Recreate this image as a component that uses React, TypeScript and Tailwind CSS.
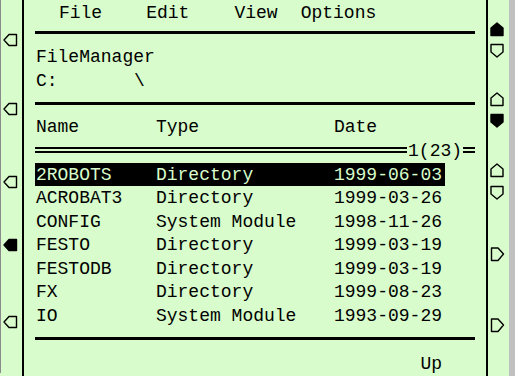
type Dir = "left" | "up" | "down" | "right";

const shapes: Record<Dir, string> = {
  left: "1,7 6,1.5 13.5,1.5 13.5,12.5 6,12.5",
  up: "7,1 13,6 13,13.5 1,13.5 1,6",
  down: "1,1.5 13,1.5 13,9 7,14 1,9",
  right: "1.5,1 8,1 13.5,7 8,13.5 1.5,13.5",
};

function Key({ dir, filled = false, className = "" }: { dir: Dir; filled?: boolean; className?: string }) {
  return (
    <svg width="15" height="15" viewBox="0 0 15 15" className={className}>
      <polygon
        points={shapes[dir]}
        fill={filled ? "#000" : "none"}
        stroke="#000"
        strokeWidth="1.4"
        strokeLinejoin="round"
      />
    </svg>
  );
}

const files = [
  { name: "2ROBOTS", type: "Directory", date: "1999-06-03" },
  { name: "ACROBAT3", type: "Directory", date: "1999-03-26" },
  { name: "CONFIG", type: "System Module", date: "1998-11-26" },
  { name: "FESTO", type: "Directory", date: "1999-03-19" },
  { name: "FESTODB", type: "Directory", date: "1999-03-19" },
  { name: "FX", type: "Directory", date: "1999-08-23" },
  { name: "IO", type: "System Module", date: "1993-09-29" },
];

const menu = [
  { label: "File", cls: "ml-[24px]" },
  { label: "Edit", cls: "ml-[44px]" },
  { label: "View", cls: "ml-[45px]" },
  { label: "Options", cls: "ml-[23px]" },
];

export default function App() {
  return (
    <div
      className="flex h-[376px] w-[515px] overflow-hidden bg-[#d8fccb] text-black"
      style={{ fontFamily: '"Liberation Mono", "DejaVu Sans Mono", monospace' }}
    >
      {/* left softkeys */}
      <div className="flex h-[373px] w-[22px] flex-col border-l border-[#8a8a8a] pl-[2px]">
        <Key dir="left" className="mt-[33px]" />
        <Key dir="left" className="mt-[54px]" />
        <Key dir="left" className="mt-[58px]" />
        <Key dir="left" filled className="mt-[48px]" />
        <Key dir="left" className="mt-[62px]" />
      </div>
      <div className="w-[2px] bg-black" />

      {/* main panel */}
      <div className="flex w-[463px] flex-col px-[11px] text-[18px] leading-[24px]">
        <div className="flex h-[33px] pt-[1px]">
          {menu.map((m) => (
            <span key={m.label} className={m.cls}>
              {m.label}
            </span>
          ))}
        </div>
        <div className="h-[3px] bg-black" />

        <div className="mt-[11px] pl-[1px]">FileManager</div>
        <div className="flex pl-[1px]">
          <span className="w-[98px]">C:</span>
          <span>\</span>
        </div>
        <div className="mt-[9px] h-[3px] bg-black" />

        <div className="mt-[10px] flex pl-[1px]">
          <span className="w-[120px]">Name</span>
          <span className="w-[178px]">Type</span>
          <span>Date</span>
        </div>

        <div className="flex h-[23px] items-center">
          <div className="h-[6px] flex-1 border-y-2 border-black" />
          <span className="px-[1px] pt-[2px]">1(23)</span>
          <div className="h-[6px] w-[12px] border-y-2 border-black" />
        </div>

        <div className="mt-[1px] flex flex-col">
          {files.map((f, i) => (
            <div
              key={f.name}
              className={`flex h-[23.5px] w-[410px] items-center pl-[1px] pt-[1px] ${
                i === 0 ? "bg-black text-[#d8fccb]" : ""
              }`}
            >
              <span className="w-[120px]">{f.name}</span>
              <span className="w-[178px]">{f.type}</span>
              <span>{f.date}</span>
            </div>
          ))}
        </div>

        <div className="mt-[10px] h-[3px] bg-black" />
        <div className="mt-[12px] flex justify-end pr-[33px]">Up</div>
      </div>
      <div className="w-[2px] bg-black" />

      {/* right softkeys */}
      <div className="flex h-[373px] w-[21px] flex-col pl-[2px]">
        <Key dir="up" filled className="mt-[22px]" />
        <Key dir="down" className="mt-[6px]" />
        <Key dir="up" className="mt-[34px]" />
        <Key dir="down" filled className="mt-[6px]" />
        <Key dir="up" className="mt-[35px]" />
        <Key dir="down" className="mt-[7px]" />
        <Key dir="right" className="mt-[47px]" />
        <Key dir="right" className="mt-[56px]" />
      </div>
      <div className="w-[6px] bg-[#c0c0c0]" />
    </div>
  );
}
